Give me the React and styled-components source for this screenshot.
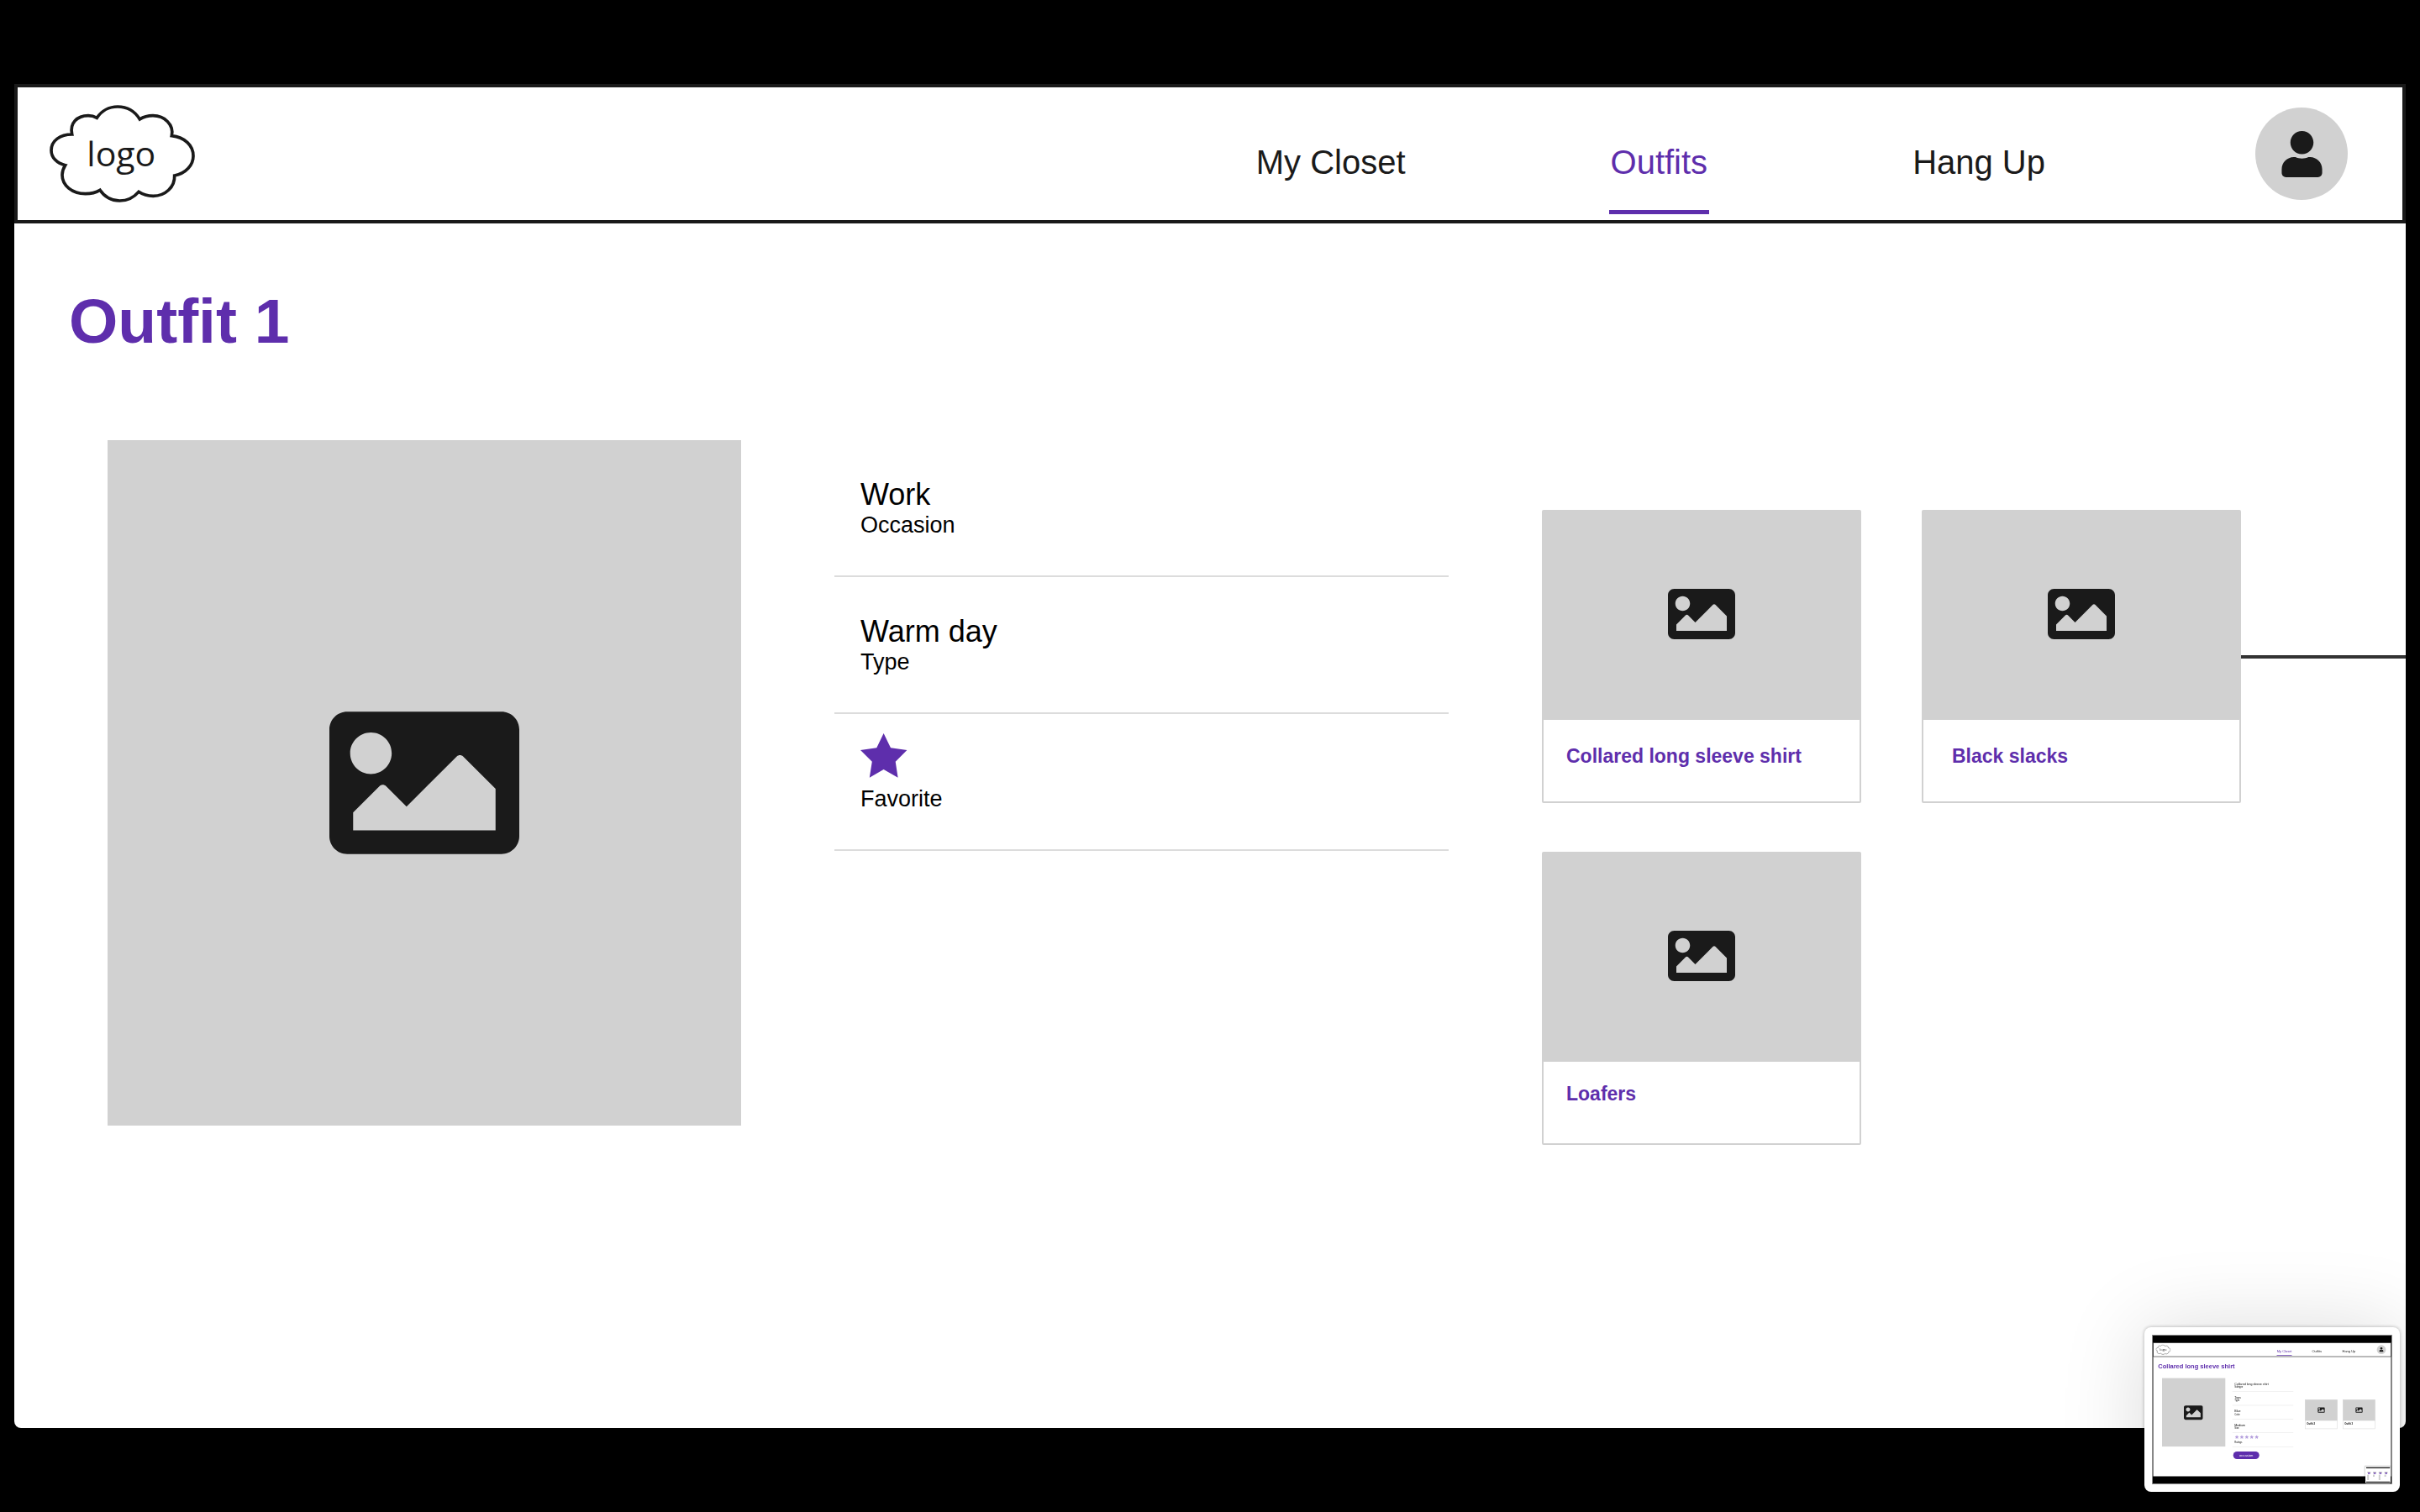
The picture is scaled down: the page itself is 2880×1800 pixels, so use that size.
import React from "react";
import styled, { createGlobalStyle } from "styled-components";
import { FaImage, FaUser } from "react-icons/fa";

const color = {
  ink: "#1a1a1a",
  accent: "#5e2eac",
  fill: "#d1d1d1",
  rule: "#dcdcdc",
  line: "#333333",
};

const GlobalStyle = createGlobalStyle`
  * { box-sizing: border-box; }
  body {
    margin: 0;
    background: #000;
    font-family: "Liberation Sans", Arial, Helvetica, sans-serif;
  }
`;

const Screen = styled.div`
  min-height: 100vh;
  padding: 100px 17px;
`;

const Page = styled.div`
  min-height: calc(100vh - 200px);
  background: #fff;
  border-radius: 0 0 8px 8px;
`;

const Header = styled.header`
  display: flex;
  align-items: center;
  height: 166px;
  padding: 0 65px 0 37px;
  border: 4px solid ${color.ink};
`;

const LogoLink = styled.a`
  display: block;
  height: 118px;
  margin-right: auto;
`;

const Nav = styled.nav`
  display: flex;
  align-self: flex-end;
  gap: 240px;
  margin: 0 248px 7px 0;
`;

const NavLink = styled.a`
  padding: 0 2px 34px;
  border-bottom: 5px solid ${(p) => (p.$active ? color.accent : "transparent")};
  color: ${(p) => (p.$active ? color.accent : color.ink)};
  font-size: 40px;
  line-height: 46px;
  text-decoration: none;
  white-space: nowrap;
`;

const AvatarButton = styled.button`
  display: flex;
  align-items: center;
  justify-content: center;
  width: 110px;
  height: 110px;
  padding: 0;
  border: 0;
  border-radius: 50%;
  background: ${color.fill};
  color: ${color.ink};
  font-size: 55px;
`;

const Title = styled.h1`
  margin: 0;
  padding: 73px 65px 0;
  color: ${color.accent};
  font-size: 75px;
  line-height: 86px;
`;

const Columns = styled.main`
  display: flex;
  align-items: flex-start;
  padding: 99px 0 0 111px;
`;

const Placeholder = styled.div`
  display: flex;
  align-items: center;
  justify-content: center;
  background: ${color.fill};
  color: ${color.ink};
`;

const Photo = styled(Placeholder)`
  flex: 754 1 0;
  aspect-ratio: 754 / 816;
  font-size: 226px;
`;

const Details = styled.section`
  flex: 731 1 0;
  margin: 0 111px;
`;

const DetailRow = styled.div`
  display: flex;
  flex-direction: column;
  justify-content: flex-end;
  height: 163px;
  padding: 0 0 44px 31px;
  border-bottom: 2px solid ${color.rule};
`;

const DetailValue = styled.div`
  font-size: 36px;
  line-height: 40px;
`;

const DetailLabel = styled.div`
  font-size: 27px;
  line-height: 32px;
`;

const StarIcon = styled.svg`
  display: block;
  width: 56px;
  height: 53px;
  margin-bottom: 9px;
  fill: ${color.accent};
`;

const Items = styled.section`
  flex: 832 1 0;
  display: grid;
  grid-template-columns: 1fr 1fr;
  gap: 58px 72px;
  padding-top: 83px;
`;

const Card = styled.article`
  height: 349px;
  border: 2px solid ${color.fill};
  border-radius: 2px;
`;

const CardPhoto = styled(Placeholder)`
  height: 248px;
  padding-bottom: 4px;
  font-size: 80px;
`;

const CardTitle = styled.h2`
  margin: 0;
  padding: ${(p) => p.$top}px 0 0 ${(p) => p.$left}px;
  color: ${color.accent};
  font-size: 23px;
  line-height: 26px;
`;

const Connector = styled.hr`
  flex: 196 1 0;
  height: 4px;
  margin: 256px 0 0;
  border: 0;
  background: ${color.line};
`;

const Preview = styled.aside`
  position: fixed;
  right: 24px;
  bottom: 24px;
  padding: 9px;
  border-radius: 8px;
  background: #fff;
  box-shadow: 0 0 4px rgba(0, 0, 0, 0.3), 0 4px 100px rgba(0, 0, 0, 0.15);
`;

const PreviewPicture = styled.svg`
  display: block;
  width: 286px;
  height: 178px;
  font-family: "Liberation Sans", Arial, sans-serif;
`;

const CLOUD =
  "M346 181C362 156 390 141 420 141C455 141 482 158 499 186C513 177 530 173 546 173C587 173 622 205 613 245C660 250 690 280 690 317C690 350 663 380 623 387C625 428 590 460 547 460C528 460 510 455 495 445C478 465 454 477 427 477C398 477 373 463 357 439C342 448 324 452 305 452C257 452 222 422 222 385C222 372 226 361 233 350C202 343 183 322 183 297C183 262 215 240 257 240C248 200 275 173 315 173C327 173 337 176 346 181Z";

const STAR = "27.6,0 36,17.3 55.4,20 41.7,33.7 44.6,52.7 27.6,43 10.8,52.7 13.8,33.7 0,20 19.3,17.3";

function Cloud(props) {
  return (
    <svg viewBox="174 132 525 354" width="175" height="118" {...props}>
      <path d={CLOUD} fill="#fff" stroke={color.ink} strokeWidth="11" />
      <text x="310" y="355" fill={color.ink} fontSize="123" fontFamily="'Open Sans', sans-serif">
        logo
      </text>
    </svg>
  );
}

const previewDetails = [
  ["Collared long sleeve shirt", "Subtype"],
  ["Tops", "Type"],
  ["Blue", "Color"],
  ["Medium", "Size"],
  [null, "Ratings"],
];

function PreviewDrawing() {
  return (
    <PreviewPicture viewBox="0 0 2860 1780" role="img" aria-label="Collared long sleeve shirt">
      <rect width="2860" height="1780" fill="#000" />
      <rect x="15" y="95" width="2830" height="1590" fill="#fff" />
      <path d="M15 95H2845V260H15Z" fill="none" stroke={color.ink} strokeWidth="6" />
      <Cloud x="45" y="115" width="178" height="125" />
      <g fontSize="40" fill={color.ink}>
        <text x="1487" y="205" fill={color.accent}>My Closet</text>
        <text x="1905" y="205">Outfits</text>
        <text x="2265" y="205">Hang Up</text>
      </g>
      <rect x="1485" y="243" width="180" height="7" fill={color.accent} />
      <circle cx="2730" cy="177" r="54" fill={color.fill} />
      <FaUser x="2702" y="149" size="56" color={color.ink} />
      <text x="73" y="403" fontSize="75" fontWeight="700" fill={color.accent}>
        Collared long sleeve shirt
      </text>
      <rect x="120" y="516" width="753" height="815" fill={color.fill} />
      <FaImage x="380" y="813" size="227" color={color.ink} />
      {previewDetails.map(([value, label], i) => (
        <g key={label} transform={`translate(0 ${i * 164})`}>
          <text x="983" y="595" fontSize="36">{value}</text>
          <text x="983" y="630" fontSize="27">{label}</text>
          <rect x="957" y="674" width="726" height="4" fill={color.rule} />
        </g>
      ))}
      {[0, 1, 2, 3, 4].map((i) => (
        <polygon
          key={i}
          points={STAR}
          fill="#b5a0dd"
          transform={`translate(${987 + i * 59} 1194) scale(0.85)`}
        />
      ))}
      <rect x="967" y="1390" width="310" height="90" rx="45" fill={color.accent} />
      <text x="1122" y="1448" fontSize="42" fill="#fff" textAnchor="middle">occasion</text>
      {[2, 3].map((n, i) => (
        <g key={n} transform={`translate(${1823 + i * 450} 773)`}>
          <rect width="383" height="346" fill="#fff" stroke={color.rule} strokeWidth="6" />
          <rect width="383" height="250" fill={color.fill} />
          <FaImage x="149" y="80" size="86" color={color.ink} />
          <text x="20" y="294" fontSize="28" fontWeight="700">{`Outfit ${n}`}</text>
        </g>
      ))}
      <rect x="2525" y="1555" width="320" height="215" rx="14" fill="#000" opacity="0.12" />
      <rect x="2540" y="1572" width="300" height="194" rx="8" fill="#fff" />
      <path d="M2550 1584H2832M2550 1752H2832" stroke="#111" strokeWidth="11" />
      {[0, 1, 2, 3].map((i) => (
        <g key={i} transform={`translate(${2570 + i * 68} 1632)`}>
          <rect x="-8" y="0" width="40" height="12" fill="#bbb" />
          <rect x="0" y="10" width="26" height="14" fill={color.accent} />
          <rect x="-8" y="34" width="20" height={i % 2 ? 24 : 64} fill="#cfcfcf" />
        </g>
      ))}
      <rect x="5" y="5" width="2850" height="1770" fill="none" stroke="#8a8a8a" strokeWidth="10" />
    </PreviewPicture>
  );
}

const navItems = ["My Closet", "Outfits", "Hang Up"];

const clothes = [
  { name: "Collared long sleeve shirt", top: 30, left: 27 },
  { name: "Black slacks", top: 30, left: 34 },
  { name: "Loafers", top: 25, left: 27 },
];

export default function App() {
  return (
    <Screen>
      <GlobalStyle />
      <Page>
        <Header>
          <LogoLink href="#home">
            <Cloud />
          </LogoLink>
          <Nav>
            {navItems.map((item) => (
              <NavLink key={item} href="#" $active={item === "Outfits"}>
                {item}
              </NavLink>
            ))}
          </Nav>
          <AvatarButton type="button" aria-label="Account">
            <FaUser />
          </AvatarButton>
        </Header>
        <Title>Outfit 1</Title>
        <Columns>
          <Photo>
            <FaImage />
          </Photo>
          <Details>
            <DetailRow>
              <DetailValue>Work</DetailValue>
              <DetailLabel>Occasion</DetailLabel>
            </DetailRow>
            <DetailRow>
              <DetailValue>Warm day</DetailValue>
              <DetailLabel>Type</DetailLabel>
            </DetailRow>
            <DetailRow>
              <StarIcon viewBox="0 0 56 53" aria-hidden="true">
                <polygon points={STAR} />
              </StarIcon>
              <DetailLabel>Favorite</DetailLabel>
            </DetailRow>
          </Details>
          <Items>
            {clothes.map((item) => (
              <Card key={item.name}>
                <CardPhoto>
                  <FaImage />
                </CardPhoto>
                <CardTitle $top={item.top} $left={item.left}>
                  {item.name}
                </CardTitle>
              </Card>
            ))}
          </Items>
          <Connector />
        </Columns>
      </Page>
      <Preview>
        <PreviewDrawing />
      </Preview>
    </Screen>
  );
}
